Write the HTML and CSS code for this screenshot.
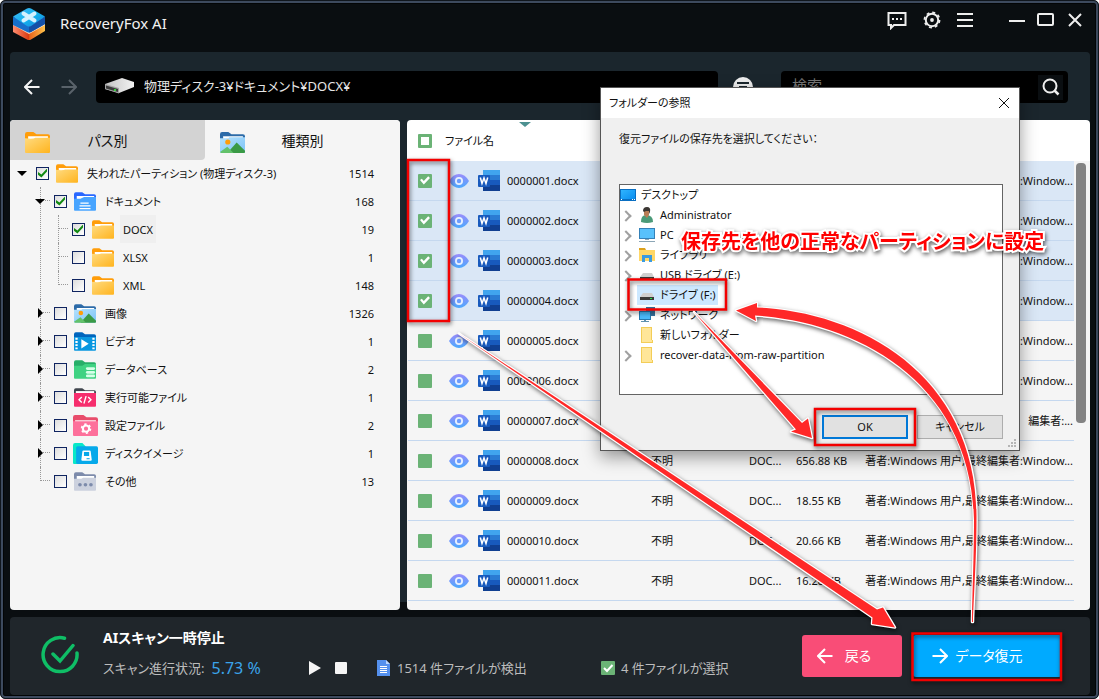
FILE: index.html
```html
<!DOCTYPE html>
<html lang="ja">
<head>
<meta charset="utf-8">
<title>RecoveryFox AI</title>
<link rel="stylesheet" href="styles.css">
</head>
<body>
<svg class="defs" aria-hidden="true">
  <defs>
    <linearGradient id="gYellow" x1="0" y1="0" x2="1" y2="1"><stop offset="0" stop-color="#ffdb80"/><stop offset="1" stop-color="#ffb41e"/></linearGradient>
    <linearGradient id="gEye" x1="0" y1="0" x2="0" y2="1"><stop offset="0" stop-color="#9a8cfb"/><stop offset="1" stop-color="#4aa9fd"/></linearGradient>
    <linearGradient id="gTop" x1="0" y1="0" x2="1" y2="1"><stop offset="0" stop-color="#4db4f5"/><stop offset=".5" stop-color="#12b5ee"/><stop offset="1" stop-color="#1b87e0"/></linearGradient>
    <linearGradient id="gBase" x1="0" y1="0" x2="1" y2="0"><stop offset="0" stop-color="#ff8d70"/><stop offset=".5" stop-color="#d93a10"/><stop offset=".52" stop-color="#e8641c"/><stop offset="1" stop-color="#ffc24a"/></linearGradient>
    <linearGradient id="gSky" x1="0" y1="0" x2="1" y2="1"><stop offset="0" stop-color="#b4e1fd"/><stop offset="1" stop-color="#7cc3f7"/></linearGradient>
    <linearGradient id="gScreen" x1="0" y1="0" x2="1" y2="1"><stop offset="0" stop-color="#2fb4ff"/><stop offset="1" stop-color="#0a8eef"/></linearGradient>
    <linearGradient id="gDisk" x1="0" y1="0" x2="1" y2="0"><stop offset="0" stop-color="#c4c4c4"/><stop offset="1" stop-color="#f2f2f2"/></linearGradient>
  </defs>
  <symbol id="folder" viewBox="0 0 24 20"><path fill="#ff9d0a" d="M0 2a2 2 0 0 1 2-2h6l3 2h11a2 2 0 0 1 2 2v9H0z"/><path fill="#fff" d="M3 4h19v5H3z"/><path fill="url(#gYellow)" d="M0 6q8 1 10-0.500H24V19a1 1 0 0 1-1 1H1a1 1 0 0 1-1-1z"/></symbol>
  <symbol id="image" viewBox="0 0 24 20"><path fill="#2d6ba8" d="M0 2a2 2 0 0 1 2-2h6l3 2h11a2 2 0 0 1 2 2v9H0z"/><path fill="#fff" d="M3 4h19v4H3z"/><path fill="url(#gSky)" d="M0 6h8l1-1h15v14a1 1 0 0 1-1 1H1a1 1 0 0 1-1-1z"/><circle cx="7.500" cy="9.500" r="2.500" fill="#ff9d0a"/><path fill="#3a9a46" d="M7 20l9-10 8 8v1a1 1 0 0 1-1 1z"/><path fill="#63c26b" d="M0 19l7-5 6 6H1z"/></symbol>
  <symbol id="document" viewBox="0 0 24 20"><path fill="#2967ff" d="M0 2a2 2 0 0 1 2-2h7l3 2h10a2 2 0 0 1 2 2v9H0z"/><path fill="#fff" d="M3 4h19v5H3z"/><path fill="#47a4ff" d="M0 7h7l4-2h13v14a1 1 0 0 1-1 1H1a1 1 0 0 1-1-1z"/><path fill="#fff" d="M7 11h9v1.500H7zM6 14h12v1.500H6zM6 17h12v1.500H6z"/></symbol>
  <symbol id="video" viewBox="0 0 24 20"><path fill="#0065bd" d="M0 2a2 2 0 0 1 2-2h7l3 2h10a2 2 0 0 1 2 2v15H0z"/><path fill="#0997e0" d="M0 5h24v14a1 1 0 0 1-1 1H1a1 1 0 0 1-1-1z"/><path fill="#fff" d="M8 7.500l8 5-8 5zM1.500 6H4v2H1.500zm0 3.500H4v2H1.500zm0 3.500H4v2H1.500zm0 3.500H4v2H1.500zM20 6h2.500v2H20zm0 3.500h2.500v2H20zm0 3.500h2.500v2H20zm0 3.500h2.500v2H20z"/></symbol>
  <symbol id="database" viewBox="0 0 24 20"><path fill="#27ae68" d="M0 2a2 2 0 0 1 2-2h7l3 2h10a2 2 0 0 1 2 2v15H0z"/><path fill="#3fd282" d="M0 6h9l3-2h12v15a1 1 0 0 1-1 1H1a1 1 0 0 1-1-1z"/><g fill="#d6ffe8"><rect x="13" y="7.500" width="10" height="3" rx="1.500"/><rect x="13" y="11.500" width="10" height="3" rx="1.500"/><rect x="13" y="15.500" width="10" height="3" rx="1.500"/></g></symbol>
  <symbol id="code" viewBox="0 0 24 20"><path fill="#40454d" d="M0 2a2 2 0 0 1 2-2h7l3 2h10a2 2 0 0 1 2 2v9H0z"/><path fill="#fff" d="M2 3h20v4H2z"/><path fill="#f62e6d" d="M0 5h24v14a1 1 0 0 1-1 1H1a1 1 0 0 1-1-1z"/><path fill="none" stroke="#fff" stroke-width="1.500" d="M8.500 9.500L5.500 12.500l3 3M15.500 9.500l3 3-3 3M13.200 8.500l-2.400 8"/></symbol>
  <symbol id="config" viewBox="0 0 24 20"><path fill="#e84c6b" d="M0 2a2 2 0 0 1 2-2h8l3 2h9a2 2 0 0 1 2 2v9H0z"/><path fill="#fff" d="M2 5h20v4H2z"/><path fill="#fd709b" d="M0 6h24v13a1 1 0 0 1-1 1H1a1 1 0 0 1-1-1z"/><circle cx="12.500" cy="13" r="3" fill="none" stroke="#fff" stroke-width="2"/><circle cx="12.500" cy="13" r="4.300" fill="none" stroke="#fff" stroke-width="1.500" stroke-dasharray="2.250 2.250"/></symbol>
  <symbol id="diskimage" viewBox="0 0 24 20"><path fill="#08e8c8" d="M0 2a2 2 0 0 1 2-2h7l3 3v17H1a1 1 0 0 1-1-1z"/><rect x="3" y="3" width="21" height="17" rx="1.500" fill="#06a9ea"/><path fill="#fff" fill-rule="evenodd" d="M10 7h6q1 0 1 1l1 8q0 1-1 1H9q-1 0-1-1l1-8q0-1 1-1zM10.500 8.500v4h5v-4z"/><path fill="#06a9ea" d="M13 14.500h3v1h-3z"/></symbol>
  <symbol id="other" viewBox="0 0 24 20"><path fill="#7d8bab" d="M0 2a2 2 0 0 1 2-2h7l3 2h10a2 2 0 0 1 2 2v9H0z"/><path fill="#fff" d="M3 4h19v4H3z"/><path fill="#ccd1de" d="M0 7h8l2-1h14v13a1 1 0 0 1-1 1H1a1 1 0 0 1-1-1z"/><g fill="#7d8bab"><circle cx="6.500" cy="13.500" r="2"/><circle cx="12.500" cy="13.500" r="2"/><circle cx="18.500" cy="13.500" r="2"/></g></symbol>
  <symbol id="eye" viewBox="0 0 20 14"><path fill="url(#gEye)" d="M0 7Q4 0 10 0t10 7q-4 7-10 7T0 7z"/><circle cx="10" cy="7" r="4" fill="#e6f0ff"/><circle cx="10" cy="7" r="2.200" fill="#6b9cfd"/></symbol>
  <symbol id="word" viewBox="0 0 22 21"><path fill="#41a5ee" d="M5 0h17v6H5z"/><path fill="#2b7cd3" d="M5 5h17v6H5z"/><path fill="#185abd" d="M5 10h17v6H5z"/><path fill="#103f91" d="M5 15h17v6H5z"/><rect y="5" width="12" height="12" rx="1" fill="#185abd"/><path fill="none" stroke="#fff" stroke-width="1.500" d="M2.300 7.500l1.700 6 2-5.500 2 5.500 1.700-6"/></symbol>
  <symbol id="drive" viewBox="0 0 16 16"><path fill="#cfcfcf" d="M4 6h9l2 4H1z"/><path fill="#3a3a3a" d="M1 10h14v3H1z"/><path fill="#25e04c" d="M11 11h2v1h-2z"/></symbol>
  <symbol id="winfolder" viewBox="0 0 16 16"><path fill="#f3cd57" d="M2 0h11v13h1v3H2z"/><path fill="#ffe699" d="M3 1h9v12h1v2H3z"/></symbol>
  <symbol id="left" viewBox="0 0 16 16"><path fill="none" stroke="currentColor" stroke-width="2" d="M15.500 8H2M8 1L1 8l7 7"/></symbol>
  <symbol id="right" viewBox="0 0 16 16"><path fill="none" stroke="currentColor" stroke-width="2" d="M.5 8H14M8 1l7 7-7 7"/></symbol>
</svg>

<div class="window">
  <header class="titlebar">
    <svg class="logo" viewBox="0 0 32 32"><path fill="url(#gBase)" d="M0 16l16-8 16 8v7l-14 8.500q-2 1-4 0L0 24z"/><path fill="#ffe0c4" d="M0 17l16 9 16-9v-3H0z"/><path fill="#176fcb" d="M0 9l16 4 16-4v7l-14 8q-2 1-4 0L0 17z"/><path fill="#1450a8" d="M16 18l16-9v7l-14 8-2 .5z"/><path fill="url(#gTop)" d="M14 .5q2-1 4 0L32 8.500 18 18q-2 1-4 0L0 8.500z"/><path stroke="#d5f2ff" stroke-width="4" stroke-linecap="round" d="M10.500 5.500l11 7M21.500 5.500l-11 7"/></svg>
    <h1 class="title">RecoveryFox AI</h1>
    <div class="tools">
      <button class="tool" aria-label="フィードバック"><svg width="20" height="20" viewBox="0 0 20 20"><path fill="none" stroke="#eee" stroke-width="2" d="M1.500 3h17v12H7l-3 3v-3H1.500z"/><path fill="#eee" d="M5 8h2v2H5zm4 0h2v2H9zm4 0h2v2h-2z"/></svg></button>
      <button class="tool" aria-label="設定"><svg width="18" height="18" viewBox="0 0 18 18"><circle cx="9" cy="9" r="6.200" fill="none" stroke="#eee" stroke-width="2"/><circle cx="9" cy="9" r="7.600" fill="none" stroke="#eee" stroke-width="1.600" stroke-dasharray="3 2.970"/><circle cx="9" cy="9" r="1.900" fill="#eee"/></svg></button>
      <button class="tool" aria-label="メニュー"><svg width="16" height="16" viewBox="0 0 16 16"><path stroke="#eee" stroke-width="2" d="M0 2h16M0 8h16M0 14h16"/></svg></button>
      <button class="tool tool-min" aria-label="最小化"><svg width="16" height="16" viewBox="0 0 16 16"><path stroke="#eee" stroke-width="2" d="M0 9h16"/></svg></button>
      <button class="tool" aria-label="最大化"><svg width="18" height="16" viewBox="0 0 18 16"><rect x="1" y="2" width="15" height="11" rx="1" fill="none" stroke="#eee" stroke-width="2"/></svg></button>
      <button class="tool" aria-label="閉じる"><svg width="14" height="14" viewBox="0 0 14 14"><path stroke="#eee" stroke-width="2" d="M1 1l12 12M13 1L1 13"/></svg></button>
    </div>
  </header>

  <main class="workspace">
    <div class="toolbar">
      <button class="nav" aria-label="戻る"><svg width="16" height="16"><use href="#left"/></svg></button>
      <button class="nav nav-off" aria-label="進む"><svg width="16" height="16"><use href="#right"/></svg></button>
      <div class="path">
        <svg width="30" height="16" viewBox="0 0 30 16"><path fill="url(#gDisk)" d="M0 6L17 0l12 4v5L14 15 0 11z"/><path fill="#a5a5a5" d="M0 6l14 4v5.500L0 11z"/><path fill="#3c3c3c" d="M1 7.500l12 3.500v3L1 10.500z"/><path fill="#35d33c" d="M9 11h2v2H9z"/></svg>
        <span>物理ディスク-3¥ドキュメント¥DOCX¥</span>
      </div>
      <button class="filter" aria-label="フィルター"><svg width="20" height="20" viewBox="0 0 20 20"><circle cx="10" cy="10" r="10" fill="#eee"/><path stroke="#1b262d" stroke-width="2" d="M4 6h12M6 10h8M8 14h4"/></svg></button>
      <form class="search">
        <input type="search" placeholder="検索" aria-label="検索">
        <button type="button" class="go" aria-label="検索を実行"><svg width="18" height="18" viewBox="0 0 18 18"><circle cx="8" cy="8" r="6.500" fill="none" stroke="#eee" stroke-width="2"/><path stroke="#eee" stroke-width="2.500" d="M12.500 12.500l4 4"/></svg></button>
      </form>
    </div>

    <div class="panels">
      <aside class="side">
        <div class="tabs">
          <button class="tab"><svg width="25" height="21"><use href="#folder"/></svg><span>パス別</span></button>
          <button class="tab tab-on"><svg width="25" height="21"><use href="#image"/></svg><span>種類別</span></button>
        </div>
        <ul class="tree">
          <li><div class="node"><button class="toggle open" aria-label="折りたたむ"></button><input type="checkbox" id="t1" checked><svg><use href="#folder"/></svg><label for="t1">失われたパーティション (物理ディスク-3)</label><span class="count">1514</span></div>
            <ul>
              <li><div class="node"><button class="toggle open" aria-label="折りたたむ"></button><input type="checkbox" id="t2" checked><svg><use href="#document"/></svg><label for="t2">ドキュメント</label><span class="count">168</span></div>
                <ul>
                  <li><div class="node"><span class="toggle"></span><input type="checkbox" id="t3" checked><svg><use href="#folder"/></svg><label for="t3" class="current">DOCX</label><span class="count">19</span></div></li>
                  <li><div class="node"><span class="toggle"></span><input type="checkbox" id="t4"><svg><use href="#folder"/></svg><label for="t4">XLSX</label><span class="count">1</span></div></li>
                  <li><div class="node"><span class="toggle"></span><input type="checkbox" id="t5"><svg><use href="#folder"/></svg><label for="t5">XML</label><span class="count">148</span></div></li>
                </ul>
              </li>
              <li><div class="node"><button class="toggle shut" aria-label="展開"></button><input type="checkbox" id="t6"><svg><use href="#image"/></svg><label for="t6">画像</label><span class="count">1326</span></div></li>
              <li><div class="node"><button class="toggle shut" aria-label="展開"></button><input type="checkbox" id="t7"><svg><use href="#video"/></svg><label for="t7">ビデオ</label><span class="count">1</span></div></li>
              <li><div class="node"><button class="toggle shut" aria-label="展開"></button><input type="checkbox" id="t8"><svg><use href="#database"/></svg><label for="t8">データベース</label><span class="count">2</span></div></li>
              <li><div class="node"><button class="toggle shut" aria-label="展開"></button><input type="checkbox" id="t9"><svg><use href="#code"/></svg><label for="t9">実行可能ファイル</label><span class="count">1</span></div></li>
              <li><div class="node"><button class="toggle shut" aria-label="展開"></button><input type="checkbox" id="t10"><svg class="wide"><use href="#config"/></svg><label for="t10">設定ファイル</label><span class="count">2</span></div></li>
              <li><div class="node"><button class="toggle shut" aria-label="展開"></button><input type="checkbox" id="t11"><svg class="wide"><use href="#diskimage"/></svg><label for="t11">ディスクイメージ</label><span class="count">1</span></div></li>
              <li><div class="node"><span class="toggle"></span><input type="checkbox" id="t12"><svg><use href="#other"/></svg><label for="t12">その他</label><span class="count">13</span></div></li>
            </ul>
          </li>
        </ul>
      </aside>

      <section class="files">
        <table>
          <colgroup><col class="c-check"><col class="c-eye"><col class="c-name"><col class="c-state"><col class="c-type"><col class="c-size"><col></colgroup>
          <thead><tr><th><input type="checkbox" class="all" aria-label="すべて選択"></th><th colspan="2" class="sorted">ファイル名</th><td colspan="4"></td></tr></thead>
          <tbody>
            <tr class="on"><td><input type="checkbox" checked aria-label="0000001.docx"></td><td><svg class="eye"><use href="#eye"/></svg></td><td><div class="file"><svg><use href="#word"/></svg>0000001.docx</div></td><td></td><td></td><td></td><td class="by">:Window...</td></tr>
            <tr class="on"><td><input type="checkbox" checked aria-label="0000002.docx"></td><td><svg class="eye"><use href="#eye"/></svg></td><td><div class="file"><svg><use href="#word"/></svg>0000002.docx</div></td><td></td><td></td><td></td><td class="by">:Window...</td></tr>
            <tr class="on"><td><input type="checkbox" checked aria-label="0000003.docx"></td><td><svg class="eye"><use href="#eye"/></svg></td><td><div class="file"><svg><use href="#word"/></svg>0000003.docx</div></td><td></td><td></td><td></td><td class="by">:Window...</td></tr>
            <tr class="on"><td><input type="checkbox" checked aria-label="0000004.docx"></td><td><svg class="eye"><use href="#eye"/></svg></td><td><div class="file"><svg><use href="#word"/></svg>0000004.docx</div></td><td></td><td></td><td></td><td class="by">:Window...</td></tr>
            <tr><td><input type="checkbox" aria-label="0000005.docx"></td><td><svg class="eye"><use href="#eye"/></svg></td><td><div class="file"><svg><use href="#word"/></svg>0000005.docx</div></td><td></td><td></td><td></td><td class="by">:Window...</td></tr>
            <tr><td><input type="checkbox" aria-label="0000006.docx"></td><td><svg class="eye"><use href="#eye"/></svg></td><td><div class="file"><svg><use href="#word"/></svg>0000006.docx</div></td><td></td><td></td><td></td><td class="by">:Window...</td></tr>
            <tr><td><input type="checkbox" aria-label="0000007.docx"></td><td><svg class="eye"><use href="#eye"/></svg></td><td><div class="file"><svg><use href="#word"/></svg>0000007.docx</div></td><td></td><td></td><td></td><td class="by">編集者:...</td></tr>
            <tr><td><input type="checkbox" aria-label="0000008.docx"></td><td><svg class="eye"><use href="#eye"/></svg></td><td><div class="file"><svg><use href="#word"/></svg>0000008.docx</div></td><td class="state">不明</td><td>DOC...</td><td>656.88 KB</td><td class="by">著者:Windows 用户,最終編集者:Window...</td></tr>
            <tr><td><input type="checkbox" aria-label="0000009.docx"></td><td><svg class="eye"><use href="#eye"/></svg></td><td><div class="file"><svg><use href="#word"/></svg>0000009.docx</div></td><td class="state">不明</td><td>DOC...</td><td>18.55 KB</td><td class="by">著者:Windows 用户,最終編集者:Window...</td></tr>
            <tr><td><input type="checkbox" aria-label="0000010.docx"></td><td><svg class="eye"><use href="#eye"/></svg></td><td><div class="file"><svg><use href="#word"/></svg>0000010.docx</div></td><td class="state">不明</td><td>DOC...</td><td>20.66 KB</td><td class="by">著者:Windows 用户,最終編集者:Window...</td></tr>
            <tr><td><input type="checkbox" aria-label="0000011.docx"></td><td><svg class="eye"><use href="#eye"/></svg></td><td><div class="file"><svg><use href="#word"/></svg>0000011.docx</div></td><td class="state">不明</td><td>DOC...</td><td>16.28 KB</td><td class="by">著者:Windows 用户,最終編集者:Window...</td></tr>
          </tbody>
        </table>
        <div class="scroll"><div class="thumb"></div></div>
      </section>
    </div>
  </main>

  <footer class="status">
    <svg class="done" width="40" height="40" viewBox="0 0 40 40"><path fill="none" stroke="#0fbe66" stroke-width="3.500" stroke-linecap="round" d="M24.500 3.200A17 17 0 1 0 37 18M13 19l7 7L33 10.500"/></svg>
    <div class="info">
      <strong>AIスキャン一時停止</strong>
      <div class="line">
        <span class="progress">スキャン進行状況: <b>5.73 %</b></span>
        <span class="controls">
          <button aria-label="再開"><svg width="12" height="14"><path fill="#f5f5f5" d="M0 0l12 7-12 7z"/></svg></button>
          <button aria-label="停止"><svg width="12" height="12"><rect width="12" height="12" rx="1" fill="#f5f5f5"/></svg></button>
        </span>
        <span class="found"><svg width="14" height="16" viewBox="0 0 14 16"><path fill="#5490ee" d="M0 0h9l4 4v12H0z"/><path fill="#bed8ff" d="M9 0l4 4H9z"/><path stroke="#fff" d="M3 6.500h7M3 8.500h7M3 10.500h7M3 12.500h7"/></svg>1514 件ファイルが検出</span>
        <span class="chosen"><svg width="14" height="14" viewBox="0 0 14 14"><rect width="14" height="14" rx="1" fill="#6bb376"/><path fill="none" stroke="#fff" stroke-width="2" d="M3 7l3 3 5.500-6"/></svg>4 件ファイルが選択</span>
      </div>
    </div>
    <div class="actions">
      <button class="btn back"><svg width="16" height="16"><use href="#left"/></svg>戻る</button>
      <button class="btn recover"><svg width="16" height="16"><use href="#right"/></svg>データ復元</button>
    </div>
  </footer>
</div>

<div class="dialog" role="dialog" aria-labelledby="dlg">
  <div class="dlg-title"><h2 id="dlg">フォルダーの参照</h2><button aria-label="閉じる"><svg width="12" height="12"><path stroke="#111" d="M1 1l10 10M11 1L1 11"/></svg></button></div>
  <div class="dlg-body">
    <p>復元ファイルの保存先を選択してください：</p>
    <ul class="places">
      <li class="root"><svg viewBox="0 0 16 16"><path fill="#0a6fc2" d="M0 2h16v12H0z"/><path fill="url(#gScreen)" d="M1 3h14v9H1z"/><path fill="#fff" d="M1 12h1v1H1zm11 0h1v1h-1zm2 0h1v1h-1z"/></svg><span>デスクトップ</span></li>
      <li class="more"><svg viewBox="0 0 16 16"><path fill="#4b9a78" d="M2 15q0-7 5-7 7 0 7 7-6 2-12 0z"/><path fill="#b87d55" d="M5 3h5v5l-2 3-3-3z"/><path fill="#3b3733" d="M4 4q0-4 4-4t3 5l-1 2V4H7L5 5z"/></svg><span>Administrator</span></li>
      <li class="more"><svg viewBox="0 0 16 16"><path fill="#3481b8" d="M0 1h16v11H0z"/><path fill="#58c1fb" d="M1 2h14v9H1z"/><path fill="#8ca6b6" d="M6 12h4v1H6zM0 14h16v1H0z"/></svg><span>PC</span></li>
      <li class="more"><svg viewBox="0 0 16 16"><path fill="#dca11d" d="M0 1h6l1 2H0z"/><path fill="#ffd767" d="M0 3h16v11H0z"/><path fill="#3a9ae0" d="M3 8h10v7h-3v-4H6v4H3z"/></svg><span>ライブラリ</span></li>
      <li class="more"><svg viewBox="0 0 16 16"><use href="#drive"/></svg><span>USB ドライブ (E:)</span></li>
      <li class="picked"><svg viewBox="0 0 16 16"><use href="#drive"/></svg><span>ドライブ (F:)</span></li>
      <li class="more"><svg viewBox="0 0 16 16"><path fill="#36719c" d="M7 0h9v9H7z"/><path fill="#2477ad" d="M0 4h12v9H0z"/><path fill="#49b8f8" d="M1 5h10v7H1z"/><path fill="#5f91ae" d="M5 13h2v1h3v1H2v-1h3z"/></svg><span>ネットワーク</span></li>
      <li><svg viewBox="0 0 16 16"><use href="#winfolder"/></svg><span>新しいフォルダー</span></li>
      <li class="more"><svg viewBox="0 0 16 16"><use href="#winfolder"/></svg><span>recover-data-from-raw-partition</span></li>
    </ul>
    <div class="dlg-actions"><button class="ok">OK</button><button>キャンセル</button></div>
  </div>
  <svg class="grip" width="9" height="9"><path fill="#b5b5b5" d="M6 0h2v2H6zM3 3h2v2H3zm3 0h2v2H6zM0 6h2v2H0zm3 0h2v2H3zm3 0h2v2H6z"/></svg>
</div>

<svg class="marks" width="1099" height="699" viewBox="0 0 1099 699" aria-hidden="true">
  <g fill="none" stroke="#f30000" stroke-width="2.500" class="shade">
    <rect x="408" y="160" width="41" height="161"/><rect x="628.500" y="279.500" width="97.500" height="30"/><rect x="815" y="409" width="100" height="36"/><rect x="912.500" y="633.500" width="148.500" height="46.500"/>
  </g>
  <g class="arrows shade" fill="#ff2828" stroke="#fff" stroke-width="2.500" stroke-linejoin="round" paint-order="stroke">
    <path d="M459 333.500L877 609.500 883 607.500 895 627.500 872 624 872.500 617.500z"/>
    <path d="M694 312L802 423 808 418.500 812 438 791 431.500 796 429.500z"/>
    <path d="M757 307.500C860 312 978 375 976.500 520C976.500 560 973.500 600 973 622L972 622C972 600 974 560 974 520C971 380 855 322 755 315.500L756 321 736 310.500 757 303z"/>
  </g>
</svg>
<div class="callout">保存先を他の正常なパーティションに設定</div>
</body>
</html>
```
FILE: styles.css
```css
* { box-sizing: border-box; }
body {
  margin: 0;
  position: relative;
  overflow: hidden;
  background: #fff;
  color: #111;
  font: 11px/16px "Noto Sans", "Noto Sans CJK JP", sans-serif;
  font-feature-settings: "palt";
}
button, input { font: inherit; font-feature-settings: inherit; color: inherit; }
button { border: 0; padding: 0; background: none; display: flex; align-items: center; justify-content: center; }
svg { flex: none; display: block; }
ul { list-style: none; margin: 0; padding: 0; }
h1, h2, p { margin: 0; font-weight: 400; }
.defs { position: absolute; width: 0; height: 0; }

.window {
  height: 100vh;
  display: flex;
  flex-direction: column;
  background: #0a0e11;
  border: 1px solid #10161d;
  border-radius: 5px;
  box-shadow: inset 0 0 0 2px #3d4a5e, inset 0 0 0 3px #030506;
  padding: 0 8px 3px 9px;
}
.titlebar { flex: none; height: 51px; display: flex; align-items: flex-start; padding: 7px 7px 0 3px; }
.logo { width: 32px; height: 32px; }
.title { margin-left: 15px; font-size: 15px; line-height: 30px; color: #f2f2f2; }
.tools { margin-left: auto; display: flex; gap: 16px; align-items: center; height: 24px; }
.tool { height: 20px; min-width: 16px; }
.tool.tool-min { margin-left: 20px; }
.tool-min + .tool, .tool-min + .tool + .tool { margin-left: -4px; }

.workspace { flex: 1; min-height: 0; display: flex; flex-direction: column; background: linear-gradient(#1b262d 550px, #0a0e11 550px); border-radius: 4px 4px 0 0; }
.toolbar { flex: none; height: 68px; display: flex; align-items: center; padding: 2px 22px 0 9px; }
.nav { width: 26px; height: 26px; color: #f4f4f4; }
.nav-off { margin-left: 11px; color: #59626a; }
.path { flex: 1; height: 32px; margin-left: 14px; padding: 0 0 2px 9px; display: flex; align-items: center; gap: 9px; background: #000; color: #e6e6e6; font-size: 13px; border-radius: 4px; }
.filter { width: 30px; height: 26px; margin-left: 10px; }
.search { width: 287px; height: 32px; margin-left: 23px; display: flex; align-items: center; background: #000; border-radius: 4px; padding-right: 5px; }
.search input { flex: 1; min-width: 0; height: 28px; border: 0; outline: 0; background: none; padding: 0 11px 4px; color: #eee; font-size: 15px; }
.search input::placeholder { color: #777; }
.go { width: 25px; height: 25px; background: #0a0e11; }

.panels { flex: 1; min-height: 0; display: flex; gap: 7px; }
.side { width: 390px; background: #f5f5f5; border-radius: 4px; overflow: hidden; }
.tabs { display: flex; height: 40px; }
.tab { flex: 1; position: relative; font-size: 14px; padding-top: 1px; background: #f5f5f5; }
.tab:first-child { background: #d3d3d3; border-radius: 0 0 4px 0; }
.tab svg { position: absolute; left: 15px; top: 12px; }
.tree { margin-top: -1px; }
.tree li { position: relative; }
.node { position: relative; height: 28px; display: flex; align-items: center; padding: 0 26px 0 7px; z-index: 1; }
.tree ul .node { padding-left: 25px; }
.tree ul ul .node { padding-left: 43px; }
.tree ul li::before { content: ""; position: absolute; left: 30px; top: 0; height: 100%; border-left: 1px dotted #999; }
.tree ul ul li::before { left: 48px; }
.tree ul li:last-child::before { height: 14px; }
.tree ul li::after { content: ""; position: absolute; left: 30px; top: 13px; width: 10px; border-top: 1px dotted #999; }
.tree ul ul li::after { left: 48px; }
.toggle { width: 10px; height: 10px; margin-right: 9px; flex: none; }
.toggle::before { content: ""; display: block; }
.open::before { border: 5px solid transparent; border-top-color: #000; border-bottom: 0; }
.shut::before { border: 5px solid transparent; border-left-color: #000; border-right: 0; }
.node input { appearance: none; flex: none; width: 13px; height: 13px; margin: 0 7px 0 0; border: 1px solid #0f2460; background: linear-gradient(135deg, #ddd, #fff); }
.node input:checked::before { content: ""; display: block; width: 9px; height: 9px; margin: 1px; background: #138a13; clip-path: polygon(0 38%, 38% 66%, 100% 0, 100% 32%, 38% 100%, 0 70%); }
.node svg { width: 22px; height: 19px; margin-right: 6px; }
.node svg.wide { width: 25px; height: 21px; margin: 0 4px 0 -1px; }
.node label { padding: 1px 3px 0; line-height: 27px; white-space: nowrap; }
.node .current { background: #efefef; }
.count { margin-left: auto; padding-top: 1px; }

.files { flex: 1; min-width: 0; display: flex; background: linear-gradient(#fff 41px, #f5f5f5 41px); border-radius: 4px; padding: 0 4px 0 1px; overflow: hidden; }
table { flex: 1; min-width: 0; table-layout: fixed; border-collapse: separate; border-spacing: 0; align-self: flex-start; }
.c-check, .c-eye { width: 34px; }
.c-name { width: 131px; }
.c-state { width: 110px; }
.c-type { width: 77px; }
.c-size { width: 58px; }
th, td { padding: 0; text-align: left; font-weight: 400; white-space: nowrap; }
thead tr { height: 41px; }
thead .sorted { position: relative; padding-left: 3px; }
.sorted::after { content: ""; position: absolute; left: 50%; top: 2px; margin-left: -6px; border: 6px solid transparent; border-top: 5px solid #4d9191; border-bottom: 0; }
tbody td { height: 40px; border-bottom: 1px solid #c5d8ef; }
.on { background: #dae7f6; }
table input { appearance: none; display: block; width: 14px; height: 14px; margin: 0 0 0 10px; border-radius: 1px; background: #6bb376; }
table .all { border: 3px solid #6bb376; background: #fff; }
table input:checked::before { content: ""; display: block; width: 10px; height: 10px; margin: 2px; background: #fff; clip-path: polygon(0 45%, 18% 32%, 38% 55%, 82% 8%, 100% 25%, 38% 90%); }
.eye { width: 20px; height: 14px; margin-left: 7px; }
.file { display: flex; align-items: center; gap: 7px; padding-left: 2px; }
.file svg { width: 22px; height: 21px; }
.state { text-align: center; }
td:nth-child(5) { padding-left: 32px; }
td:nth-child(6) { padding-left: 2px; }
td.by { text-align: right; padding-right: 1px; }
.scroll { width: 12px; padding: 43px 0 0 2px; }
.thumb { width: 10px; height: 260px; border-radius: 4px; background: #838383; }

.status { flex: none; height: 78px; margin-top: 7px; background: #20262b; border-radius: 4px; display: flex; align-items: flex-start; }
.done { margin: 18px 0 0 30px; }
.info { margin: 11px 0 0 23px; color: #bcbcbc; font-size: 13px; }
.info strong { display: block; color: #fff; line-height: 20px; font-size: 14px; }
.line { display: flex; align-items: center; height: 20px; margin-top: 10px; white-space: nowrap; }
.progress { width: 206px; display: flex; align-items: center; gap: 7px; }
.progress b { color: #3ba4ea; font-weight: 400; font-size: 16px; }
.controls { width: 68px; display: flex; align-items: center; gap: 14px; }
.found { width: 224px; display: flex; align-items: center; gap: 6px; }
.chosen { display: flex; align-items: center; gap: 6px; }
.actions { margin: 18px 28px 0 auto; display: flex; gap: 11px; }
.btn { height: 42px; border-radius: 3px; color: #fff; font-size: 14px; }
.btn.back { width: 100px; gap: 12px; padding-right: 16px; background: #f94d77; }
.btn.recover { width: 149px; gap: 7px; padding-right: 20px; background: #00aaff; }

.dialog { position: absolute; left: 600px; top: 87px; width: 420px; height: 364px; display: flex; flex-direction: column; background: #f0f0f0; border: 1px solid #555; box-shadow: 0 6px 16px rgba(0, 0, 0, .4); }
.dlg-title { height: 30px; padding: 0 9px 0 8px; display: flex; align-items: center; justify-content: space-between; background: #fff; }
.dlg-title h2 { font-size: 11px; }
.dlg-body { flex: 1; display: flex; flex-direction: column; padding: 13px 16px 11px 18px; }
.places { height: 211px; margin-top: 37px; background: #fff; border: 1px solid #646464; white-space: nowrap; }
.places li { position: relative; height: 20px; display: flex; align-items: center; padding-left: 19px; }
.places .root { padding-left: 0; }
.places li svg { width: 16px; height: 16px; }
.places span { padding: 0 5px; line-height: 20px; }
.places .picked { margin-left: 17px; padding-left: 2px; width: 81px; background: #cce8ff; }
.more::before { content: ""; position: absolute; left: 2px; top: 7px; width: 6px; height: 6px; border: solid #a0a0a0; border-width: 2px 2px 0 0; transform: rotate(45deg); }
.dlg-actions { margin-top: auto; display: flex; justify-content: flex-end; gap: 9px; }
.dlg-actions button { width: 86px; height: 24px; background: #e1e1e1; border: 1px solid #adadad; }
.dlg-actions .ok { border: 2px solid #0078d7; }
.grip { position: absolute; right: 2px; bottom: 2px; }

.marks { position: absolute; left: 0; top: 0; pointer-events: none; }
.shade { filter: drop-shadow(1px 2px 2px rgba(0, 0, 0, .6)); }
.callout { position: absolute; left: 681px; top: 228px; font-size: 20px; line-height: 28px; font-weight: 700; color: #f00; white-space: nowrap; -webkit-text-stroke: 4px #fff; paint-order: stroke fill; filter: drop-shadow(1px 2px 2px rgba(0, 0, 0, .6)); }
```
